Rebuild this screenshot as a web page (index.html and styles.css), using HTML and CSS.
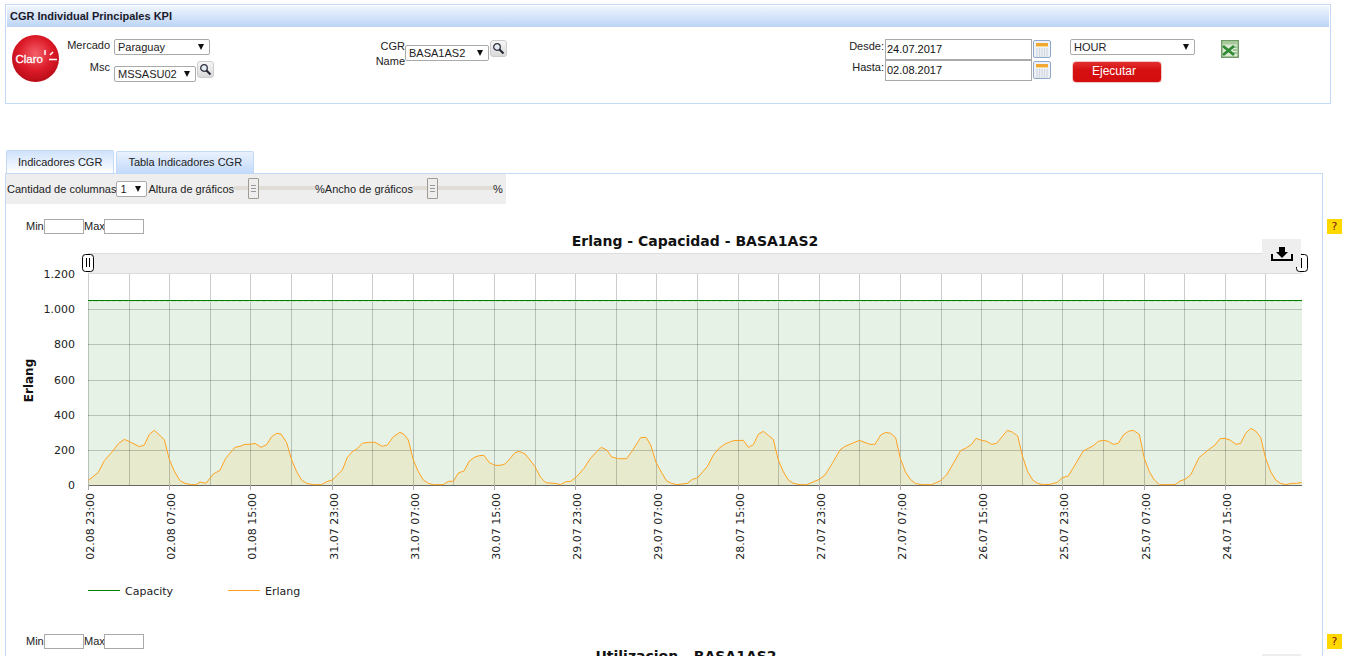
FILE: index.html
```html
<!DOCTYPE html>
<html lang="en">
<head>
    <meta charset="UTF-8">
    <meta name="viewport" content="width=device-width, initial-scale=1.0">
    <title>CGR Individual Principales KPI</title>
    <link rel="stylesheet" href="styles.css">
</head>
<body>

    <div class="panel">
        <div class="panel-title">CGR Individual Principales KPI</div>
        <div class="filters">
            <svg class="logo" width="47" height="47" viewBox="0 0 47 47">
                <defs>
                    <radialGradient id="claro-red" cx="50%" cy="40%" r="60%">
                        <stop offset="0" stop-color="#f4606a"/>
                        <stop offset="0.6" stop-color="#dc1a28"/>
                        <stop offset="1" stop-color="#b80d18"/>
                    </radialGradient>
                </defs>
                <circle cx="23.5" cy="23.5" r="23.5" fill="url(#claro-red)"/>
                <text x="3.5" y="28" class="logo-text">Claro</text>
                <path d="M33 15v5M38 20l3-3M37 24.500h8" stroke="#fff" stroke-width="1.500" fill="none"/>
            </svg>

            <div class="group-market">
                <label class="label">Mercado</label>
                <div class="select select-market"><select><option>Paraguay</option></select><span class="arrow"></span></div>
                <label class="label">Msc</label>
                <div class="with-search">
                    <div class="select select-msc"><select><option>MSSASU02</option></select><span class="arrow"></span></div>
                    <button class="search">
                        <svg width="13" height="13" viewBox="0 0 13 13"><circle cx="5" cy="5" r="3.300" fill="#e6edf2" stroke="#334" stroke-width="1.300"/><path d="M7.500 7.500l4 4" stroke="#223" stroke-width="2"/></svg>
                    </button>
                </div>
            </div>

            <div class="group-cgr">
                <label class="label label-cgr">CGR Name</label>
                <div class="select select-cgr"><select><option>BASA1AS2</option></select><span class="arrow"></span></div>
                <button class="search">
                    <svg width="13" height="13" viewBox="0 0 13 13"><circle cx="5" cy="5" r="3.300" fill="#e6edf2" stroke="#334" stroke-width="1.300"/><path d="M7.500 7.500l4 4" stroke="#223" stroke-width="2"/></svg>
                </button>
            </div>

            <div class="group-dates">
                <div class="date-row">
                    <label class="label label-date">Desde:</label>
                    <input class="date-input" type="text" value="24.07.2017">
                    <button class="calendar">
                        <svg width="14" height="15" viewBox="0 0 14 15"><rect x="1" y="1" width="12" height="3" fill="#f0a830"/><rect x="1" y="4" width="12" height="1" fill="#f8dc90"/><path d="M2 6v9M4.500 6v9M7 6v9M9.500 6v9M12 6v9" stroke="#d3d8df" stroke-width="1.200"/></svg>
                    </button>
                </div>
                <div class="date-row">
                    <label class="label label-date">Hasta:</label>
                    <input class="date-input" type="text" value="02.08.2017">
                    <button class="calendar">
                        <svg width="14" height="15" viewBox="0 0 14 15"><rect x="1" y="1" width="12" height="3" fill="#f0a830"/><rect x="1" y="4" width="12" height="1" fill="#f8dc90"/><path d="M2 6v9M4.500 6v9M7 6v9M9.500 6v9M12 6v9" stroke="#d3d8df" stroke-width="1.200"/></svg>
                    </button>
                </div>
            </div>

            <div class="group-run">
                <div class="select select-hour"><select><option>HOUR</option></select><span class="arrow"></span></div>
                <button class="run">Ejecutar</button>
            </div>

            <svg class="excel" width="18" height="18" viewBox="0 0 18 18">
                <rect width="18" height="18" fill="#6f9c64"/>
                <rect x="1.500" y="1.500" width="15" height="15" fill="#dbe9d3"/>
                <rect x="1.500" y="1.500" width="15" height="3" fill="#a8c89c"/>
                <path d="M12 7h4M12 10h4M12 13h4" stroke="#8cbc86" stroke-width="1.500"/>
                <path d="M2 6l11 9M13 6L2 15" stroke="#2f8a34" stroke-width="2.800"/>
            </svg>
        </div>
    </div>

    <div class="tabs">
        <div class="tab tab-active">Indicadores CGR</div>
        <div class="tab">Tabla Indicadores CGR</div>
    </div>

    <div class="content">
        <div class="tab-panel">
            <div class="toolbar">
                <span class="tool-label">Cantidad de columnas</span>
                <div class="select select-cols"><select><option>1</option></select><span class="arrow"></span></div>
                <span class="tool-label">Altura de gráficos</span>
                <div class="slider"><span class="slider-handle"></span></div>
                <span class="tool-label">%</span>
                <span class="tool-label">Ancho de gráficos</span>
                <div class="slider slider-width"><span class="slider-handle"></span></div>
                <span class="tool-label">%</span>
            </div>

            <div class="chart">
                <div class="limits">
                    <span class="limit-min">Min</span><input class="limit-input" type="text"><span class="limit-max">Max</span><input class="limit-input" type="text">
                </div>
                <h3 class="chart-title">Erlang - Capacidad - BASA1AS2</h3>
                <button class="download">
                    <svg width="22" height="15" viewBox="0 0 22 15"><path d="M8 0h6v5h3l-6 6-6-6h3z" fill="#000"/><path d="M1 7v6h20V7" fill="none" stroke="#000" stroke-width="2"/></svg>
                </button>
                <svg class="plot" width="1316" height="362" viewBox="6 249 1316 362">
                    <!-- range selector -->
                    <rect x="88" y="253" width="1214" height="21" fill="#eee"/>
                    <path d="M88 253.500H1302M88 273.500H1302" stroke="#ddd"/>

                    <!-- areas -->
                    <rect x="88" y="300" width="1214" height="185" fill="#008000" opacity="0.1"/>
                    <g transform="translate(0 400) scale(0.33333)">
                        <path class="erlang-area" d="M265 256L265,241 295,217 313,182 335,157 355,131 373,118 395,128 418,140 433,135 448,103 463,91 493,119 508,178 522,212 540,242 555,250 575,254 588,254 600,246 618,250 640,222 660,211 677,175 705,142 720,139 735,133 750,133 765,130 783,142 800,134 815,110 830,100 843,102 860,128 875,180 890,215 905,240 920,250 940,254 965,254 980,245 997,240 1027,210 1042,172 1057,155 1072,146 1087,130 1105,127 1125,127 1147,139 1162,135 1180,110 1200,97 1212,103 1225,120 1240,180 1255,215 1270,240 1285,250 1300,254 1330,254 1345,244 1360,244 1375,219 1392,213 1408,183 1425,171 1438,167 1452,166 1468,188 1485,196 1500,196 1515,192 1530,176 1545,158 1558,154 1575,162 1590,180 1605,200 1622,232 1637,248 1665,250 1682,254 1697,245 1712,244 1730,230 1752,205 1770,177 1790,155 1804,142 1820,150 1835,171 1855,176 1880,176 1895,155 1922,113 1938,112 1952,135 1968,187 1985,218 2000,243 2015,250 2030,254 2062,250 2077,238 2092,234 2122,200 2140,165 2155,147 2175,132 2200,122 2230,121 2245,142 2260,134 2275,103 2290,94 2305,106 2320,118 2335,180 2350,215 2365,240 2380,250 2400,254 2420,254 2458,238 2475,225 2497,190 2520,150 2535,139 2550,133 2578,121 2610,133 2625,133 2642,105 2657,97 2672,100 2687,113 2701,175 2716,215 2731,238 2746,250 2765,254 2795,254 2820,243 2840,225 2860,190 2882,152 2900,143 2915,133 2928,115 2945,121 2960,124 2975,133 2990,130 3022,91 3037,96 3053,108 3068,170 3083,215 3098,240 3113,250 3130,254 3150,253 3172,247 3187,233 3205,228 3250,153 3280,137 3295,124 3310,121 3325,124 3340,133 3355,130 3370,105 3385,94 3400,91 3418,103 3433,175 3448,215 3463,240 3478,254 3525,254 3540,243 3555,238 3572,225 3597,173 3625,150 3645,135 3660,116 3675,115 3690,120 3708,133 3722,130 3737,100 3752,85 3767,93 3782,112 3797,175 3812,215 3827,240 3842,250 3857,254 3875,250 3890,250 3905,247 L3905 256Z"/>
                    </g>

                    <!-- grid -->
                    <path class="grid" d="M88.500 274V485M129.500 274V485M169.500 274V485M210.500 274V485M250.500 274V485M291.500 274V485M332.500 274V485M372.500 274V485M413.500 274V485M453.500 274V485M494.500 274V485M535.500 274V485M575.500 274V485M616.500 274V485M656.500 274V485M697.500 274V485M738.500 274V485M778.500 274V485M819.500 274V485M859.500 274V485M900.500 274V485M941.500 274V485M981.500 274V485M1022.500 274V485M1062.500 274V485M1103.500 274V485M1144.500 274V485M1184.500 274V485M1225.500 274V485M1265.500 274V485"/>
                    <path class="grid" d="M88 309.500H1302M88 344.500H1302M88 380.500H1302M88 415.500H1302M88 450.500H1302"/>
                    <path class="axis" d="M88 485.500H1302"/>
                    <path class="ticks" d="M88.500 485V490M169.500 485V490M250.500 485V490M332.500 485V490M413.500 485V490M494.500 485V490M575.500 485V490M656.500 485V490M738.500 485V490M819.500 485V490M900.500 485V490M981.500 485V490M1062.500 485V490M1144.500 485V490M1225.500 485V490"/>

                    <!-- series -->
                    <path class="capacity-line" d="M88 300.500H1302"/>
                    <path class="capacity-dash" d="M88 301.500H1302"/>
                    <g transform="translate(0 400) scale(0.33333)">
                        <path class="erlang-line" d="M265,241 295,217 313,182 335,157 355,131 373,118 395,128 418,140 433,135 448,103 463,91 493,119 508,178 522,212 540,242 555,250 575,254 588,254 600,246 618,250 640,222 660,211 677,175 705,142 720,139 735,133 750,133 765,130 783,142 800,134 815,110 830,100 843,102 860,128 875,180 890,215 905,240 920,250 940,254 965,254 980,245 997,240 1027,210 1042,172 1057,155 1072,146 1087,130 1105,127 1125,127 1147,139 1162,135 1180,110 1200,97 1212,103 1225,120 1240,180 1255,215 1270,240 1285,250 1300,254 1330,254 1345,244 1360,244 1375,219 1392,213 1408,183 1425,171 1438,167 1452,166 1468,188 1485,196 1500,196 1515,192 1530,176 1545,158 1558,154 1575,162 1590,180 1605,200 1622,232 1637,248 1665,250 1682,254 1697,245 1712,244 1730,230 1752,205 1770,177 1790,155 1804,142 1820,150 1835,171 1855,176 1880,176 1895,155 1922,113 1938,112 1952,135 1968,187 1985,218 2000,243 2015,250 2030,254 2062,250 2077,238 2092,234 2122,200 2140,165 2155,147 2175,132 2200,122 2230,121 2245,142 2260,134 2275,103 2290,94 2305,106 2320,118 2335,180 2350,215 2365,240 2380,250 2400,254 2420,254 2458,238 2475,225 2497,190 2520,150 2535,139 2550,133 2578,121 2610,133 2625,133 2642,105 2657,97 2672,100 2687,113 2701,175 2716,215 2731,238 2746,250 2765,254 2795,254 2820,243 2840,225 2860,190 2882,152 2900,143 2915,133 2928,115 2945,121 2960,124 2975,133 2990,130 3022,91 3037,96 3053,108 3068,170 3083,215 3098,240 3113,250 3130,254 3150,253 3172,247 3187,233 3205,228 3250,153 3280,137 3295,124 3310,121 3325,124 3340,133 3355,130 3370,105 3385,94 3400,91 3418,103 3433,175 3448,215 3463,240 3478,254 3525,254 3540,243 3555,238 3572,225 3597,173 3625,150 3645,135 3660,116 3675,115 3690,120 3708,133 3722,130 3737,100 3752,85 3767,93 3782,112 3797,175 3812,215 3827,240 3842,250 3857,254 3875,250 3890,250 3905,247"/>
                    </g>

                    <!-- range handles -->
                    <rect class="range-handle" x="82.500" y="254.500" width="11" height="17" rx="3"/>
                    <path class="range-grip" d="M86.500 258v9M89.500 258v9"/>
                    <rect class="range-handle" x="1296.500" y="254.500" width="11" height="17" rx="3"/>
                    <path class="range-grip" d="M1301.500 258v10"/>

                    <!-- y axis -->
                    <text class="tick-y" x="75" y="278">1.200</text>
                    <text class="tick-y" x="75" y="313">1.000</text>
                    <text class="tick-y" x="75" y="348">800</text>
                    <text class="tick-y" x="75" y="384">600</text>
                    <text class="tick-y" x="75" y="419">400</text>
                    <text class="tick-y" x="75" y="454">200</text>
                    <text class="tick-y" x="75" y="489">0</text>
                    <text class="axis-title" transform="translate(33 380.500) rotate(-90)">Erlang</text>

                    <!-- x axis -->
                    <text class="tick-x" transform="translate(94 493) rotate(-90)">02.08 23:00</text>
                    <text class="tick-x" transform="translate(175 493) rotate(-90)">02.08 07:00</text>
                    <text class="tick-x" transform="translate(256 493) rotate(-90)">01.08 15:00</text>
                    <text class="tick-x" transform="translate(338 493) rotate(-90)">31.07 23:00</text>
                    <text class="tick-x" transform="translate(419 493) rotate(-90)">31.07 07:00</text>
                    <text class="tick-x" transform="translate(500 493) rotate(-90)">30.07 15:00</text>
                    <text class="tick-x" transform="translate(581 493) rotate(-90)">29.07 23:00</text>
                    <text class="tick-x" transform="translate(662 493) rotate(-90)">29.07 07:00</text>
                    <text class="tick-x" transform="translate(744 493) rotate(-90)">28.07 15:00</text>
                    <text class="tick-x" transform="translate(825 493) rotate(-90)">27.07 23:00</text>
                    <text class="tick-x" transform="translate(906 493) rotate(-90)">27.07 07:00</text>
                    <text class="tick-x" transform="translate(987 493) rotate(-90)">26.07 15:00</text>
                    <text class="tick-x" transform="translate(1068 493) rotate(-90)">25.07 23:00</text>
                    <text class="tick-x" transform="translate(1150 493) rotate(-90)">25.07 07:00</text>
                    <text class="tick-x" transform="translate(1231 493) rotate(-90)">24.07 15:00</text>

                    <!-- legend -->
                    <path class="capacity-line" d="M88 590.500H120"/>
                    <text class="legend" x="125" y="595">Capacity</text>
                    <path class="erlang-line" d="M228 590.500H260"/>
                    <text class="legend" x="265" y="595">Erlang</text>
                </svg>
            </div>

            <div class="chart chart-second">
                <div class="limits">
                    <span class="limit-min">Min</span><input class="limit-input" type="text"><span class="limit-max">Max</span><input class="limit-input" type="text">
                </div>
                <h3 class="chart-title">Utilizacion - BASA1AS2</h3>
                <button class="download"></button>
            </div>
        </div>

        <div class="help-column">
            <span class="help">?</span>
            <span class="help">?</span>
        </div>
    </div>

</body>
</html>
```
FILE: styles.css
```css
html, body {
    margin: 0;
    padding: 0;
    height: 656px;
    overflow: hidden;
    background-color: #fff;
}

body {
    font-family: 'Liberation Sans', Arial, sans-serif;
    font-size: 11px;
    color: #222;
}

button {
    padding: 0;
    cursor: pointer;
}

.panel {
    margin: 4px 0 0 5px;
    width: 1324px;
    height: 98px;
    border: 1px solid #c4d9f6;
}

.panel-title {
    margin: 1px 1px 0;
    height: 21px;
    line-height: 21px;
    padding-left: 3px;
    font-weight: bold;
    color: #1a1a2a;
    background: linear-gradient(#eff5fd, #bcd4f6);
}

.filters {
    display: flex;
    align-items: flex-start;
    padding: 8px 0 0 6px;
}

.logo {
    flex: none;
}

.logo-text {
    font-family: 'Liberation Sans', Arial, sans-serif;
    font-size: 11.5px;
    fill: #fff;
    stroke: #fff;
    stroke-width: 0.3;
}

.label {
    text-align: right;
}

.select {
    position: relative;
    height: 16px;
    box-sizing: border-box;
}

.select select {
    appearance: none;
    -webkit-appearance: none;
    display: block;
    width: 100%;
    height: 16px;
    box-sizing: border-box;
    padding: 0 0 0 3px;
    border: 1px solid #aaa;
    border-radius: 2px;
    background: #fff;
    font-family: 'Liberation Sans', Arial, sans-serif;
    font-size: 11px;
    color: #222;
}

.arrow {
    position: absolute;
    top: 5px;
    right: 6px;
    width: 0;
    height: 0;
    border-left: 3.5px solid transparent;
    border-right: 3.5px solid transparent;
    border-top: 6px solid #111;
}

.group-market {
    margin: 4px 0 0 0;
    display: grid;
    grid-template-columns: 51px auto;
    column-gap: 4px;
    row-gap: 6px;
    align-items: start;
}

.select-market {
    width: 96px;
}

.with-search {
    display: flex;
    align-items: flex-start;
}

.select-msc {
    width: 82px;
    margin-top: 5px;
}

.search {
    display: flex;
    align-items: center;
    justify-content: center;
    width: 17px;
    height: 17px;
    margin-left: 1px;
    border: 1px solid #ccc;
    border-radius: 3px;
    background: linear-gradient(#f6f6f6, #dadada);
}

.group-cgr {
    display: flex;
    align-items: flex-start;
    margin: 5px 0 0 161px;
}

.label-cgr {
    width: 30px;
    line-height: 15px;
    margin-top: -1px;
}

.select-cgr {
    width: 84px;
    margin-top: 5px;
}

.group-dates {
    margin: 4px 0 0 327px;
}

.date-row {
    display: flex;
    align-items: flex-start;
    height: 21px;
}

.label-date {
    width: 50px;
    line-height: 14px;
    margin-right: 1px;
}

.date-input {
    width: 147px;
    height: 21px;
    box-sizing: border-box;
    margin: 0;
    padding: 0 0 2px 1px;
    border: 1px solid #aaa;
    font-family: 'Liberation Sans', Arial, sans-serif;
    font-size: 11px;
    color: #111;
}

.calendar {
    display: flex;
    align-items: center;
    justify-content: center;
    width: 18px;
    height: 18px;
    margin: 1px 0 0 1px;
    border: 1px solid #8fa9c9;
    border-radius: 2px;
    background: #eef2f8;
}

.group-run {
    margin: 4px 0 0 19px;
}

.select-hour {
    width: 125px;
}

.run {
    display: block;
    width: 90px;
    height: 22px;
    margin: 6px 0 0 2px;
    padding: 0 6px 2px 0;
    border: 1px solid #f0c8c8;
    border-radius: 4px;
    background: linear-gradient(#e23030 0, #d51010 40%, #d40d0d);
    color: #fff;
    font-family: 'Liberation Sans', Arial, sans-serif;
    font-size: 12px;
}

.excel {
    margin: 5px 0 0 26px;
}

.tabs {
    display: flex;
    align-items: flex-end;
    gap: 2px;
    margin: 46px 0 0 6px;
    height: 23px;
}

.tab {
    height: 21px;
    line-height: 20px;
    padding: 0 11px;
    border: 1px solid #c4d9f6;
    border-bottom: none;
    border-radius: 2px 2px 0 0;
    background: linear-gradient(#e9f1fd, #c3dbfb);
    color: #222;
}

.tab-active {
    height: 22px;
    line-height: 22px;
    background: linear-gradient(#cfe2fb, #fff);
}

.content {
    display: flex;
}

.tab-panel {
    width: 1316px;
    margin-left: 5px;
    height: 482px;
    overflow: hidden;
    border: 1px solid #c4d9f6;
    border-bottom: none;
}

.toolbar {
    display: flex;
    align-items: center;
    width: 499px;
    height: 30px;
    padding-left: 1px;
    background-color: #eee;
}

.tool-label {
    white-space: nowrap;
}

.select-cols {
    width: 31px;
    margin: 0 1px 0 0;
}

.slider {
    position: relative;
    width: 81px;
    height: 4px;
    margin-bottom: 2px;
    background-color: #e0dcd6;
}

.slider-width {
    width: 80px;
}

.slider-handle {
    position: absolute;
    top: -8px;
    left: 14px;
    width: 9px;
    height: 19px;
    border: 1px solid #a09a90;
    border-radius: 1px;
    background-color: #eee;
    background-image: linear-gradient(#999 1px, transparent 1px);
    background-size: 5px 3px;
    background-position: 2px 6px;
    background-repeat: repeat-y;
    background-clip: content-box;
    padding: 6px 0 5px;
    height: 8px;
}

.chart {
    position: relative;
    height: 415px;
}

.toolbar + .chart {
    margin-top: 14px;
}

.limits {
    display: flex;
    align-items: center;
    height: 16px;
    padding-left: 20px;
}

.limit-min {
    width: 18px;
}

.limit-max {
    width: 20px;
}

.limit-input {
    width: 40px;
    height: 15px;
    box-sizing: border-box;
    margin: 0;
    border: 1px solid #aaa;
}

.chart-title {
    margin: -1px 0 0;
    padding-left: 62px;
    height: 16px;
    line-height: 16px;
    text-align: center;
    font-family: 'DejaVu Sans', sans-serif;
    font-size: 14px;
    font-weight: bold;
    color: #111;
}

.chart-second .chart-title {
    padding-left: 44px;
}

.download {
    display: flex;
    justify-content: center;
    align-items: flex-start;
    position: absolute;
    top: 21px;
    left: 1256px;
    width: 39px;
    height: 28px;
    padding-top: 8px;
    border: none;
    background-color: #eee;
    z-index: 2;
}

.plot {
    display: block;
}

.grid {
    fill: none;
    stroke: #000;
    stroke-opacity: 0.2;
}

.axis {
    stroke: #666;
}

.ticks {
    stroke: #aaa;
}

.erlang-area {
    fill: #ffa500;
    fill-opacity: 0.1;
}

.erlang-line {
    fill: none;
    stroke: #ffa21f;
    stroke-width: 3;
}

.plot > .erlang-line {
    stroke-width: 1;
}

.capacity-line {
    fill: none;
    stroke: #008000;
}

.capacity-dash {
    fill: none;
    stroke: #cfe5c8;
    stroke-dasharray: 4 2;
}

.range-handle {
    fill: #fff;
    stroke: #000;
}

.range-grip {
    fill: none;
    stroke: #000;
}

.tick-y,
.tick-x {
    font-family: 'DejaVu Sans', sans-serif;
    font-size: 11px;
    text-anchor: end;
    fill: #222;
}

.axis-title {
    font-family: 'DejaVu Sans', sans-serif;
    font-size: 12px;
    font-weight: bold;
    text-anchor: middle;
    fill: #111;
}

.legend {
    font-family: 'DejaVu Sans', sans-serif;
    font-size: 11px;
    fill: #222;
}

.help-column {
    display: flex;
    flex-direction: column;
    gap: 400px;
    padding: 46px 0 0 4px;
}

.help {
    display: block;
    width: 15px;
    height: 15px;
    line-height: 15px;
    text-align: center;
    background-color: #ffd800;
    color: #7a1010;
    font-family: 'DejaVu Sans', sans-serif;
    font-size: 11px;
}
```
